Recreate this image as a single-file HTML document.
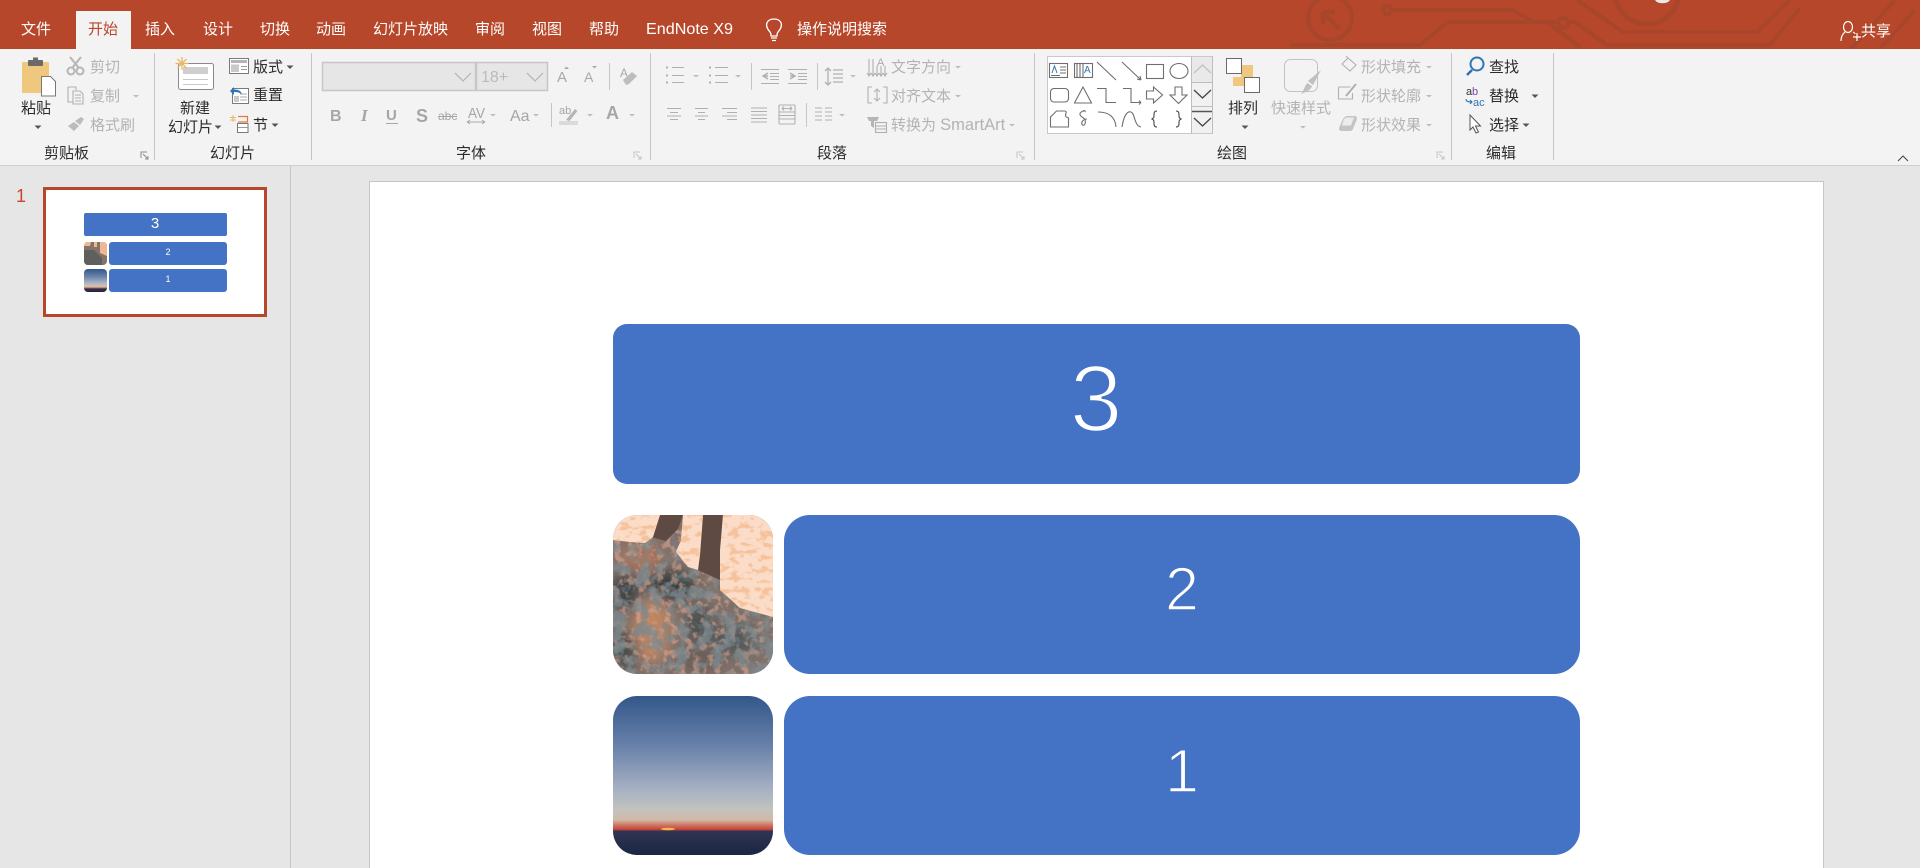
<!DOCTYPE html>
<html lang="zh"><head><meta charset="utf-8"><title>PowerPoint</title>
<style>
html,body{margin:0;padding:0;width:1920px;height:868px;overflow:hidden;background:#e6e6e6}
svg{display:block;position:absolute;left:0;top:0}
text{font-family:"Liberation Sans","Noto Sans CJK SC",sans-serif;font-size:15px;white-space:pre}
.w text,text.w{fill:#fff}
.d text{fill:#2b2b2b}
.g text{fill:#b3b3b3}
.i{fill:none;stroke:#b0b0b0;stroke-width:1.1}
.k{fill:none;stroke:#6f6f6f;stroke-width:1.1}
</style></head><body>
<svg width="1920" height="868" viewBox="0 0 1920 868" xmlns="http://www.w3.org/2000/svg">
<defs>
<path id="ad" d="M-3.5 -1.500h7l-3.500 3.500z" fill="#555"/>
<path id="ag" d="M-3 -1h6l-3 2.500z" fill="#bcbcbc"/>
<clipPath id="c1"><rect x="613" y="515" width="160" height="159" rx="24"/></clipPath>
<clipPath id="c2"><rect x="613" y="696" width="160" height="159" rx="24"/></clipPath>
<clipPath id="t1"><rect x="84" y="242" width="23" height="23" rx="4"/></clipPath>
<clipPath id="t2"><rect x="84" y="269" width="23" height="23" rx="4"/></clipPath>
<clipPath id="pe"><path d="M613 515h47l-7 22-8 6-15-1-17-2zM683 515h20l-3 40-2 15-10-3-12-15 5-12zM723 515h50v102l-33-9-20-18v-40z"/></clipPath>
<linearGradient id="sky" x1="0" y1="0" x2="0" y2="1">
<stop offset="0" stop-color="#33578a"/><stop offset=".3" stop-color="#657fa8"/><stop offset=".6" stop-color="#a9b3c3"/><stop offset=".72" stop-color="#c5c3bd"/><stop offset=".78" stop-color="#d2b8a6"/><stop offset=".81" stop-color="#cc7a66"/><stop offset=".84" stop-color="#cc4038"/><stop offset=".85" stop-color="#2f3552"/><stop offset="1" stop-color="#1a2642"/>
</linearGradient>
<filter id="nb" x="-5%" y="-5%" width="110%" height="110%"><feGaussianBlur stdDeviation="6"/></filter>
<filter id="nd" x="0" y="0" width="1" height="1"><feTurbulence type="fractalNoise" baseFrequency=".08" numOctaves="5" seed="4"/><feColorMatrix values="0 0 0 0 .2  0 0 0 0 .25  0 0 0 0 .27  0 0 0 5 -2.2"/></filter>
<filter id="no" x="0" y="0" width="1" height="1"><feTurbulence type="fractalNoise" baseFrequency=".14" numOctaves="4" seed="9"/><feColorMatrix values="0 0 0 0 .78  0 0 0 0 .42  0 0 0 0 .3  0 0 0 5 -2.4"/></filter>
<filter id="np" x="0" y="0" width="1" height="1"><feTurbulence type="fractalNoise" baseFrequency=".1 .16" numOctaves="4" seed="15"/><feColorMatrix values="0 0 0 0 .92  0 0 0 0 .5  0 0 0 0 .28  0 0 0 7 -3.6"/></filter>
</defs>

<!-- backgrounds -->
<rect width="1920" height="868" fill="#e6e6e6"/>
<rect width="1920" height="49" fill="#b7472a"/>
<g fill="none" stroke="#a8462b" stroke-width="4">
<circle cx="1330" cy="18" r="22"/><path d="M1323 12h12M1323 12v12M1323 12l17 17" stroke-width="4.500"/>
<circle cx="1387" cy="10" r="4"/><path d="M1391 10H1513L1533 22H1558"/><circle cx="1563" cy="23" r="5"/>
<path d="M1290 45H1420L1448 22H1547L1580 47"/>
<path d="M1568 22H1575L1607 45H1770L1800 8"/>
<circle cx="1647" cy="-8" r="32" stroke-width="5"/>
<path d="M1577 0L1623 32H1757L1790 0M1851 49L1895 0M1880 49L1915 10"/>
</g>
<path d="M1655 0a8 5 0 0 0 15 0z" fill="#e8e8e8"/>
<rect y="49" width="1920" height="116" fill="#f3f3f3"/>
<rect y="165" width="1920" height="1" fill="#cfcfcf"/>
<rect x="76" y="11" width="55" height="38" fill="#f3f3f3"/>

<!-- tabs -->
<g class="w">
<text x="21" y="34">文件</text><text x="145" y="34">插入</text><text x="203" y="34">设计</text><text x="260" y="34">切换</text><text x="316" y="34">动画</text><text x="373" y="34">幻灯片放映</text><text x="475" y="34">审阅</text><text x="532" y="34">视图</text><text x="589" y="34">帮助</text>
<text x="646" y="34" textLength="87" lengthAdjust="spacingAndGlyphs" style="font-size:16px">EndNote X9</text><text x="797" y="34">操作说明搜索</text><text x="1861" y="36">共享</text>
</g>
<text x="88" y="34" fill="#b7472a">开始</text>
<!-- bulb -->
<g fill="none" stroke="#fff" stroke-width="1.300"><path d="M770 32c-7-8-2-13 4-13s11 5 4 13c-1 1-1 3-1 4h-6c0-1 0-3-1-4z"/><path d="M771 38h6M772 40.500h4"/></g>
<!-- share -->
<g fill="none" stroke="#fff" stroke-width="1.200"><ellipse cx="1848" cy="27" rx="4.500" ry="5.500"/><path d="M1841 41c0-6 3-8 4-9M1853 32c1 .5 2 1 2 2M1853 37h8M1857 33v8"/></g>

<!-- separators -->
<g fill="#c6c6c6">
<rect x="154" y="53" width="1" height="107"/><rect x="311" y="53" width="1" height="107"/><rect x="650" y="53" width="1" height="107"/><rect x="1034" y="53" width="1" height="107"/><rect x="1451" y="53" width="1" height="107"/><rect x="1553" y="53" width="1" height="107"/>
<rect x="609" y="63" width="1" height="27"/><rect x="551" y="103" width="1" height="24"/><rect x="751" y="63" width="1" height="27"/><rect x="817" y="63" width="1" height="27"/><rect x="806" y="103" width="1" height="24"/>
</g>

<!-- dark labels -->
<g class="d">
<text x="21" y="113">粘贴</text>
<text x="180" y="113">新建</text><text x="168" y="132">幻灯片</text>
<text x="253" y="72">版式</text><text x="253" y="100">重置</text><text x="253" y="130">节</text>
<text x="44" y="158">剪贴板</text><text x="210" y="158">幻灯片</text><text x="456" y="158">字体</text><text x="817" y="158">段落</text><text x="1217" y="158">绘图</text><text x="1486" y="158">编辑</text>
<text x="1228" y="113">排列</text>
<text x="1489" y="72">查找</text><text x="1489" y="101">替换</text><text x="1489" y="130">选择</text>
</g>
<!-- gray labels -->
<g class="g">
<text x="90" y="72">剪切</text><text x="90" y="101">复制</text><text x="90" y="130">格式刷</text>
<text x="891" y="72">文字方向</text><text x="891" y="101">对齐文本</text><text x="891" y="130">转换为 <tspan style="font-size:16.500px">SmartArt</tspan></text>
<text x="1271" y="113">快速样式</text>
<text x="1361" y="72">形状填充</text><text x="1361" y="101">形状轮廓</text><text x="1361" y="130">形状效果</text>
</g>

<!-- arrows -->
<use href="#ad" x="38" y="127"/><use href="#ad" x="218" y="127"/><use href="#ad" x="290" y="67"/><use href="#ad" x="275" y="125"/><use href="#ad" x="1245" y="127"/><use href="#ad" x="1535" y="96"/><use href="#ad" x="1526" y="125"/>
<use href="#ag" x="136" y="96"/><use href="#ag" x="493" y="115"/><use href="#ag" x="536" y="115"/><use href="#ag" x="590" y="115"/><use href="#ag" x="632" y="115"/><use href="#ag" x="696" y="76"/><use href="#ag" x="738" y="76"/><use href="#ag" x="853" y="76"/><use href="#ag" x="958" y="67"/><use href="#ag" x="958" y="96"/><use href="#ag" x="1012" y="125"/><use href="#ag" x="842" y="115"/><use href="#ag" x="1303" y="127"/><use href="#ag" x="1429" y="67"/><use href="#ag" x="1429" y="96"/><use href="#ag" x="1429" y="125"/>

<!-- clipboard -->
<rect x="22" y="62" width="27" height="31" rx="1" fill="#efc77f"/>
<rect x="28" y="60" width="15" height="6" rx="1" fill="#6a6a6a"/><rect x="33" y="57.500" width="5" height="3" fill="#6a6a6a"/>
<path d="M41.500 76.500h9l5 5v14.500h-14z" fill="#fff" stroke="#777"/>
<!-- scissors -->
<g fill="none" stroke="#b5b5b5" stroke-width="2"><circle cx="71" cy="71" r="3.500"/><circle cx="80" cy="71" r="3.500"/><path d="M72.500 67.500L81 57M78.500 67.500L70 57"/></g>
<!-- copy -->
<g class="i"><path d="M68 87h8v3M68 87v15h5M73 91h7l3 3v10h-10zM75 95h6M75 98h6M75 101h6"/></g>
<!-- brush -->
<path d="M68 126l6-4 5 4-5 5zM75 121l6-4 3 2-4 6z" fill="#bcbcbc"/>
<!-- new slide -->
<rect x="178.500" y="63.500" width="35" height="26" rx="2" fill="#fff" stroke="#8a8a8a"/>
<rect x="183" y="67" width="25" height="7" fill="#cfcfcf"/><path d="M183 79.500h25M183 84.500h25" stroke="#c8c8c8"/>
<g stroke="#e9b768" stroke-width="1.300"><path d="M182 57v13M175.500 63.500h13M177.500 59l9 9M186.500 59l-9 9"/></g>
<!-- layout icon -->
<rect x="229.500" y="58.500" width="19" height="15" fill="#fff" stroke="#7a7a7a"/><rect x="231" y="60" width="16" height="3" fill="#b5b5b5"/><rect x="231" y="64.500" width="8" height="7.500" fill="#c9c9c9"/><path d="M241 66.500h6M241 69.500h6" stroke="#9a9a9a"/>
<!-- reset -->
<rect x="232.500" y="88.500" width="16" height="15" fill="#fff" stroke="#7a7a7a"/><path d="M240 94h7M240 97h7M240 100h7" stroke="#a8a8a8"/><rect x="234" y="96" width="5" height="6" fill="#c9c9c9"/>
<path d="M230 91l4-4v2.500c4 0 7 1 8 5c-2-2-5-2.500-8-2.500V95z" fill="#2f75b5"/>
<!-- section -->
<path d="M238 116.500h9.500v5.500h-9.500" fill="none" stroke="#e07b39" stroke-width="1.200"/><rect x="237.500" y="123.500" width="10.500" height="9" fill="#fff" stroke="#7a7a7a"/><path d="M238 127.500h10" stroke="#999"/>
<path d="M230 117.500h6M230 120h6M233 115v7" stroke="#e9b768"/>

<!-- font combo -->
<rect x="322.500" y="62.500" width="153" height="28" fill="#e6e6e6" stroke="#c6c6c6" stroke-width="1.500"/>
<rect x="476.500" y="62.500" width="71" height="28" fill="#e6e6e6" stroke="#c6c6c6" stroke-width="1.500"/>
<text x="481" y="82" fill="#bbb" style="font-size:16px">18+</text>
<path d="M455 73l8 8 8-8M527 73l8 8 8-8" fill="none" stroke="#b0b0b0" stroke-width="1.100"/>
<!-- font row 1 -->
<text x="557" y="82" fill="#a8a8a8" style="font-size:15px">A</text><path d="M564 69l2.500-2.500 2.500 2.500z" fill="#a8a8a8"/>
<text x="584" y="82" fill="#a8a8a8" style="font-size:14px">A</text><path d="M592 66h5l-2.500 2.500z" fill="#a8a8a8"/>
<text x="620" y="77" fill="#aaa" style="font-size:12px">A</text><path d="M623 80l9-8 5 4-8 8-3 1z" fill="#bdbdbd"/>
<!-- font row 2 -->
<g fill="#a6a6a6">
<text x="330" y="121" style="font-size:16px;font-weight:bold">B</text>
<text x="361" y="121" style="font-size:17px;font-style:italic;font-family:'Liberation Serif',serif;font-weight:bold">I</text>
<text x="386" y="120" style="font-size:15px;font-weight:bold">U</text><rect x="386" y="123" width="12" height="1"/>
<text x="416" y="122" style="font-size:18px;font-weight:bold">S</text>
<text x="438" y="120" style="font-size:12px">abc</text><rect x="438" y="116" width="19" height="1"/>
<text x="468" y="118" style="font-size:15px" textLength="17" lengthAdjust="spacingAndGlyphs">AV</text><path d="M467 122h18M467 122l3-2M467 122l3 2M485 122l-3-2M485 122l-3 2" stroke="#a8a8a8" fill="none"/>
<text x="510" y="121" style="font-size:16px">Aa</text>
<text x="559" y="114" style="font-size:11px">ab</text><path d="M566 120l9-11 2.500 2-8 10z" fill="#b5b5b5"/><rect x="559" y="121" width="19" height="4" fill="#dadada"/>
<text x="606" y="119" style="font-size:18px;font-weight:bold">A</text>
</g>
<!-- para icons -->
<g class="i">
<path d="M672 67.500h12M672 75.500h12M672 82.500h12M715 67.500h13M715 75.500h13M715 82.500h13"/>
<path d="M666 67.500h2M666 75.500h2M666 82.500h2M709 67.500h2M709 75.500h2M709 82.500h2" stroke-width="2"/>
<path d="M761 69.500h18M770 73.500h9M770 76.500h9M770 79.500h9M761 83.500h18M788 69.500h19M798 73.500h9M798 76.500h9M798 79.500h9M788 83.500h19"/>
<path d="M768 73l-5 3 5 3M790 73l5 3-5 3M763 76h5M790 76h5" stroke-width="1.500"/>
<path d="M833 70h10M833 74h10M833 78h10M833 82h10M828 68v17M825 71l3-3 3 3M825 82l3 3 3-3" stroke-width="1.300"/>
<path d="M667 108.500h14M670 112.500h8M667 116h14M670 119.500h8M695 108.500h13M698 112.500h7M695 116h13M698 119.500h7M722 108.500h15M727 112.500h10M722 116h15M727 119.500h10M751 108h16M751 111.500h16M751 115h16M751 118.500h16M751 122h16"/>
<path d="M779 105h16M779 124h16M779 112h16M779 115.500h16M779 119h16M779 105v19M795 105v19M782 108.500h10M782 108.500l2-2M782 108.500l2 2M792 108.500l-2-2M792 108.500l-2 2"/>
<path d="M815 108h7M825 108h7M815 112h7M825 112h7M815 116h7M825 116h7M815 120h7M825 120h7"/>
<path d="M869 59v17M873 59v17M877 66v10M881 66v10M885 66v10M867 73l2 3 2-3M871 73l2 3 2-3M875 73l2 3 2-3M879 73l2 3 2-3M883 73l2 3 2-3"/>
<text x="877" y="66" style="font-size:11px" fill="#aaa" stroke="none">A</text>
<path d="M872 87h-4v16h4M883 87h4v16h-4M877 90v10M874 92l3-3 3 3M874 98l3 3 3-3"/>
<rect x="875.500" y="122.500" width="11" height="10"/><path d="M876 126h10M876 129h10"/>
</g>
<path d="M867 117h12l-2 4h-3v7l-3-2v-5h-2z" fill="#b5b5b5"/>

<!-- gallery -->
<rect x="1047.500" y="56.500" width="165" height="77" fill="#fff" stroke="#c9c9c9"/>
<rect x="1192" y="57" width="20" height="25" fill="#e9e9e9"/><rect x="1192" y="82.500" width="20" height="24" fill="#f1f1f1"/><rect x="1192" y="107" width="20" height="26" fill="#f1f1f1"/>
<path d="M1191.500 56.500v77M1192 82.500h20M1192 106.500h20M1212.500 56.500v77" stroke="#bdbdbd" fill="none"/>
<path d="M1194 73l8.500-8 8.500 8" fill="none" stroke="#c2c2c2" stroke-width="1.300"/>
<path d="M1194 90l8.500 8 8.500-8M1194 118l8.500 8 8.500-8" fill="none" stroke="#444" stroke-width="1.300"/>
<path d="M1192 111.500h20" stroke="#555" stroke-width="1.500"/>
<g class="k">
<rect x="1049.500" y="63.500" width="18" height="14"/><path d="M1060 67h6M1060 70h6M1060 73h6M1051 75.500h9"/>
<rect x="1074.500" y="63.500" width="18" height="14"/><path d="M1077 64v13M1080 64v13M1083 64v13"/>
<path d="M1097 62l19 18"/><path d="M1122 62l19 18M1141 80l-4-1M1141 80l-1-4"/>
<rect x="1146.500" y="64.500" width="17" height="14"/><ellipse cx="1179" cy="71" rx="9" ry="7.500"/>
<rect x="1050.500" y="88.500" width="18" height="13.500" rx="3.500"/><path d="M1083 87l-8.500 16h17z"/><path d="M1097 88.500h9v14h10"/><path d="M1123 88.500h8v14h10M1141 102.500l-2-2M1141 102.500l-2 2"/>
<path d="M1146.500 91h7v-4l9 8-9 8v-4h-7z"/><path d="M1175 87h7v8h5l-8.500 8.500-8.500-8.500h5z"/>
<path d="M1050.500 127v-10l6-6h8c2 0 2 1 1 4c0 2 1 2 3 3v9z"/><path d="M1084 111c-5 1-5 4-2 6c3 2 4 3 3 7c-2 3-4 0-3-2c1-2 3-3 5-3M1083 111c1-1 3 0 2 1" />
<path d="M1098 112c9 0 17 3 18 15"/><path d="M1122 127c2-13 6-16 9-15c4 1 3 14 10 15"/>
<path d="M1157 111c-3 0-3 2-3 4s0 3-2 4c2 1 2 2 2 4s0 4 3 4M1176 111c3 0 3 2 3 4s0 3 2 4c-2 1-2 2-2 4s0 4-3 4" stroke="#444"/>
</g>
<path d="M1052 73l2.500-7 2.500 7" stroke="#2f75b5" fill="none"/>
<text x="1084" y="73" style="font-size:10px" fill="#2f75b5">A</text>

<!-- arrange -->
<rect x="1241" y="65" width="12" height="12" fill="#efc77f"/><rect x="1233" y="77" width="11" height="9" fill="#efc77f"/>
<rect x="1226.500" y="58.500" width="15" height="15" fill="#fff" stroke="#6a6a6a"/><rect x="1244.500" y="77.500" width="15" height="15" fill="#fff" stroke="#6a6a6a"/>
<!-- quick styles -->
<rect x="1284.500" y="59.500" width="33" height="32" rx="6" fill="#f3f3f3" stroke="#c2c2c2"/>
<path d="M1321 70l-8 15-5-4zM1307 83l5 3c-1 4-6 6-11 8c2-2 3-6 6-11z" fill="#c0c0c0"/>
<!-- shape fill etc -->
<g class="i"><path d="M1342 64l6-6 8 7-6 6zM1348 58l-2-2"/><path d="M1338.500 87h12M1338.500 87v12h14v-6"/><path d="M1346 96l10-12" stroke-width="2"/></g>
<path d="M1339 128l4-9c1-2 3-3 5-3h7c1 0 2 1 2 3l-4 10c-1 2-2 2-4 2h-8c-1 0-2-1-2-3z" fill="#c4c4c4"/><path d="M1344 119c1-1 2-1.500 3-1.500h7l-3 8h-9z" fill="#ececec"/>

<!-- find etc -->
<circle cx="1477" cy="64" r="6.500" fill="none" stroke="#2f75b5" stroke-width="2"/><path d="M1472 70l-5 5" stroke="#2f75b5" stroke-width="2.600"/>
<text x="1466" y="95" style="font-size:11px" fill="#333">a</text><text x="1472" y="95" style="font-size:11px" fill="#7a3fb0">b</text>
<text x="1473" y="106" style="font-size:11px" fill="#2f75b5">ac</text><path d="M1466 99c0 2 1 3 6 3M1470 100l2 2-2 2" fill="none" stroke="#2f75b5" stroke-width="1.100"/>
<path d="M1470 115v15l3-3 3 6 2.500-1-3-6h5z" fill="#fff" stroke="#555"/>

<!-- launchers -->
<g fill="none" stroke="#8a8a8a"><path d="M141 158v-6h6M143 154l5 5M148 156v3h-3"/></g>
<g fill="none" stroke="#c4c4c4"><path d="M634 158v-6h6M636 154l5 5M641 156v3h-3M1017 158v-6h6M1019 154l5 5M1024 156v3h-3M1437 158v-6h6M1439 154l5 5M1444 156v3h-3"/></g>
<path d="M1898 161l5-5 5 5" fill="none" stroke="#444"/>

<!-- sidebar -->
<rect x="290" y="166" width="1" height="702" fill="#c6c6c6"/>
<text x="16" y="202" fill="#c8472a" style="font-size:18px">1</text>
<rect x="44.500" y="188.500" width="221" height="127" fill="#fff" stroke="#b7472a" stroke-width="3"/>
<rect x="84" y="213" width="143" height="23" rx="2" fill="#4472c4"/>
<rect x="109" y="242" width="118" height="23" rx="3" fill="#4472c4"/>
<rect x="109" y="269" width="118" height="23" rx="3" fill="#4472c4"/>
<g clip-path="url(#t1)"><rect x="84" y="242" width="23" height="23" fill="#84736a"/><path d="M84 242h7l-1 4h-6zM94 242h3v5h-3zM100 242h7v14l-7-3z" fill="#eeb892"/><path d="M84 250l10 0 8 8v7h-18z" fill="#5f5f5c"/></g>
<rect x="84" y="269" width="23" height="23" fill="url(#sky)" clip-path="url(#t2)"/>
<text x="155" y="228" text-anchor="middle" class="w" style="font-size:15px">3</text>
<text x="168" y="255" text-anchor="middle" class="w" style="font-size:9px">2</text>
<text x="168" y="282" text-anchor="middle" class="w" style="font-size:9px">1</text>

<!-- slide -->
<rect x="369.500" y="181.500" width="1454" height="700" fill="#fff" stroke="#c6c6c6"/>
<rect x="613" y="324" width="967" height="160" rx="14" fill="#4472c4"/>
<rect x="784" y="515" width="796" height="159" rx="26" fill="#4472c4"/>
<rect x="784" y="696" width="796" height="159" rx="26" fill="#4472c4"/>
<text x="1096" y="431" text-anchor="middle" fill="#fff" stroke="#4472c4" stroke-width="2.500" style="font-size:95px">3</text>
<text x="1182" y="610" text-anchor="middle" fill="#fff" stroke="#4472c4" stroke-width="1.600" style="font-size:61px">2</text>
<text x="1182" y="792" text-anchor="middle" fill="#fff" stroke="#4472c4" stroke-width="1.600" style="font-size:61px">1</text>

<!-- photo 1 -->
<g clip-path="url(#c1)">
<rect x="613" y="515" width="160" height="159" fill="#80706a"/>
<g filter="url(#nb)">
<ellipse cx="625" cy="592" rx="15" ry="17" fill="#3c4446"/>
<ellipse cx="672" cy="586" rx="24" ry="15" fill="#384143"/>
<ellipse cx="700" cy="625" rx="14" ry="20" fill="#4c5152"/>
<ellipse cx="735" cy="640" rx="24" ry="16" fill="#545a5c"/>
<ellipse cx="625" cy="650" rx="13" ry="18" fill="#454b4d"/>
<ellipse cx="652" cy="630" rx="18" ry="32" fill="#c08562"/>
<ellipse cx="640" cy="557" rx="22" ry="11" fill="#b0745a"/>
<ellipse cx="700" cy="660" rx="22" ry="12" fill="#6a5f5a"/>
</g>
<rect x="613" y="515" width="160" height="159" filter="url(#no)" opacity=".55"/>
<rect x="613" y="515" width="160" height="159" filter="url(#nd)" opacity=".8"/>
<path d="M660 515h23l-5 14-12 12-15-4zM703 515h20l-3 40v25l-22-10 4-40z" fill="#5e4a42"/>
<path d="M613 515h47l-7 22-8 6-15-1-17-2zM683 515h20l-3 40-2 15-10-3-12-15 5-12zM723 515h50v102l-33-9-20-18v-40z" fill="#fbdcc8"/>
<g clip-path="url(#pe)"><rect x="613" y="515" width="160" height="110" filter="url(#np)" opacity=".8"/></g>
</g>
<!-- photo 2 -->
<rect x="613" y="696" width="160" height="159" rx="24" fill="url(#sky)"/>
<ellipse cx="668" cy="829" rx="7" ry="1.200" fill="#f2b84e"/>
</svg>
</body></html>
